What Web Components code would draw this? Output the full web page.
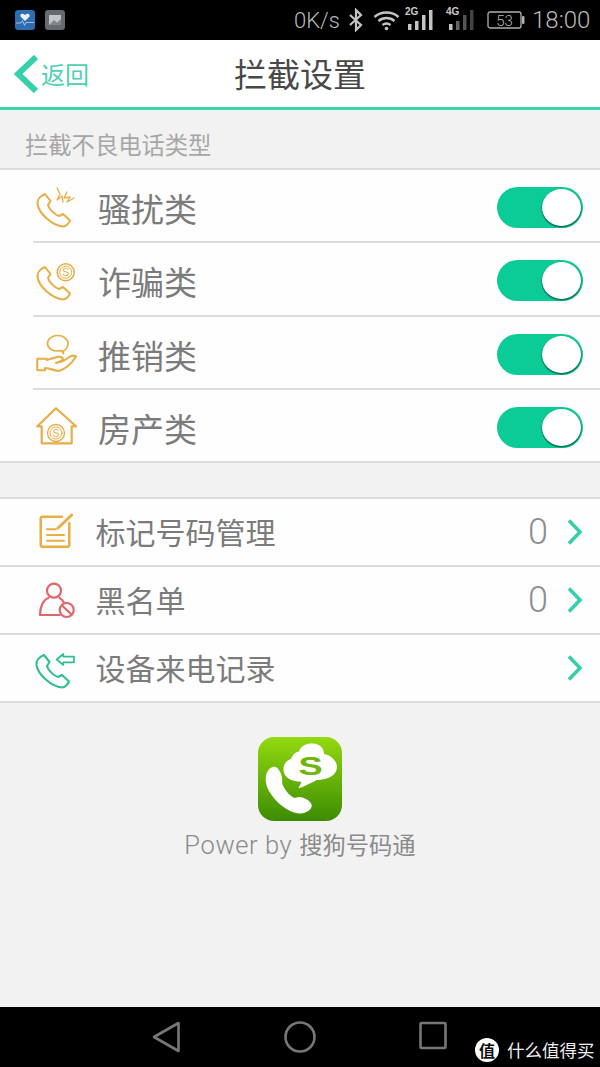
<!DOCTYPE html>
<html lang="zh">
<head>
<meta charset="utf-8">
<title>拦截设置</title>
<style>
    html, body { margin: 0; padding: 0; background: #f2f2f2; }
    body { font-family: 'Noto Sans CJK SC', 'Noto Sans', sans-serif; }
    .app { display: flex; flex-direction: column; width: 600px; height: 1067px; overflow: hidden; }
    .spacer { flex: 1; }
    svg { display: block; }
</style>
</head>
<body>
<div class="app">
    <status-bar></status-bar>
    <nav-header title="拦截设置" back="返回"></nav-header>
    <section-title>拦截不良电话类型</section-title>

    <block-list>
        <block-row>
            <svg slot="icon" width="44" height="44" viewBox="0 0 44 44" fill="none" stroke="#e8ad45" stroke-width="2" stroke-linejoin="round" stroke-linecap="round">
                <path d="M12 10C7 12 4 16 4.500 20C6 30 20 42 30 42.500C33 42.500 36 39 37 36.500L30 30L26 32C22 31 16 25 15 21L17.500 17Z"/>
                <path d="M24 4L27 10L24 16L29 12L30 18M34 8L31 14L37 13L34 18L41 14" stroke-width="1.300"/>
            </svg>
            骚扰类
        </block-row>
        <block-row>
            <svg slot="icon" width="44" height="44" viewBox="0 0 44 44" fill="none" stroke="#e8ad45" stroke-width="2" stroke-linejoin="round">
                <path d="M12 10C7 12 4 16 4.500 20C6 30 20 42 30 42.500C33 42.500 36 39 37 36.500L30 30L26 32C22 31 16 25 15 21L17.500 17Z"/>
                <circle cx="32.700" cy="15.300" r="8.500" stroke-width="1.500"/>
                <circle cx="32.700" cy="15.300" r="6" stroke-width="1"/>
                <text x="32.700" y="19" font-family="Liberation Sans" font-size="10.500" text-anchor="middle" fill="#e8ad45" stroke="none">S</text>
            </svg>
            诈骗类
        </block-row>
        <block-row>
            <svg slot="icon" width="44" height="44" viewBox="0 0 44 44" fill="none" stroke="#e8ad45" stroke-width="2.100" stroke-linejoin="round" stroke-linecap="round">
                <path d="M30 21.500C33 19.500 35 17 35 13.500C35 9 30.500 5.500 24.700 5.500C19 5.500 14.500 9 14.500 13.500C14.500 18 19 21 24.700 21C26 21 27 20.800 28 20.500L30.500 23.500Z" stroke-width="1.700"/>
                <path d="M4.300 28.800L13.700 28.800L13.700 30L25 26.800C28 26.500 30 28 30 29.500C28 31.500 26 32 23 33L30.300 31L37 26.500C40 25.300 43 25.500 43 26.500C39 33 32 39 26 41C22 41 17 38 12 38L12 40.200L4.300 40.200Z"/>
            </svg>
            推销类
        </block-row>
        <block-row last>
            <svg slot="icon" width="44" height="44" viewBox="0 0 44 44" fill="none" stroke="#e8ad45" stroke-width="2.200" stroke-linejoin="round" stroke-linecap="round">
                <path d="M23 5.300L4.300 23.300L8.700 23.300L8.700 40.300L38.700 40.300L38.700 23.300L43 23.300Z"/>
                <circle cx="23" cy="30" r="8.500" stroke-width="1.400"/>
                <circle cx="23" cy="30" r="6" stroke-width="1"/>
                <text x="23" y="33.800" font-family="Liberation Sans" font-size="10.500" text-anchor="middle" fill="#e8ad45" stroke="none">S</text>
            </svg>
            房产类
        </block-row>
    </block-list>

    <div style="height:34px;flex:none"></div>

    <block-list>
        <menu-row count="0">
            <svg slot="icon" width="44" height="44" viewBox="0 0 44 44" fill="none" stroke="#e8ad45" stroke-width="2.500" stroke-linecap="round" stroke-linejoin="round">
                <path d="M29 6.700L9.700 6.700Q7.700 6.700 7.700 8.700L7.700 34.700Q7.700 36.700 9.700 36.700L34.300 36.700Q36.300 36.700 36.300 34.700L36.300 13"/>
                <path d="M25 18L38.700 5" stroke-width="3"/>
                <path d="M14 19.300L23 19.300M14 25L31 25M14 30.700L31 30.700" stroke-width="2"/>
            </svg>
            标记号码管理
        </menu-row>
        <menu-row count="0">
            <svg slot="icon" width="44" height="44" viewBox="0 0 44 44" fill="none" stroke="#e0666b" stroke-width="2.200" stroke-linecap="round" stroke-linejoin="round">
                <circle cx="21" cy="12.700" r="7"/>
                <path d="M15.500 20C10 22 7 29 7 37L26.500 37M26.500 20C28.500 21 30 22.800 31 24.500"/>
                <circle cx="33.700" cy="32" r="7"/>
                <path d="M29 27.500L38.500 36.500"/>
            </svg>
            黑名单
        </menu-row>
        <menu-row>
            <svg slot="icon" width="44" height="44" viewBox="0 0 44 44" fill="none" stroke="#2fc08c" stroke-width="2.100" stroke-linejoin="round">
                <path d="M11 9C6 11 3 15 3.500 19C5 29 19 41 29 41.500C32 41.500 35 38 36 35.500L29 29L25 31C21 30 15 24 14 20L16.500 16Z"/>
                <path d="M23.700 13.500L30.300 8L30.300 10.700L41 10.700L41 16.300L30.300 16.300L30.300 19Z" stroke-width="1.700"/>
            </svg>
            设备来电记录
        </menu-row>
    </block-list>

    <power-by></power-by>
    <div class="spacer"></div>
    <android-nav></android-nav>
</div>

<script>
class StatusBar extends HTMLElement {
    constructor() {
        super();
        this.attachShadow({ mode: 'open' });
    }

    connectedCallback() {
        this.shadowRoot.innerHTML = `
            <style>
                :host { display: flex; align-items: center; height: 40px; background: #000; color: #b9b9b9; font-family: 'Roboto', sans-serif; font-weight: 300; flex: none; }
                svg { display: block; flex: none; }
                .speed { font-size: 22px; margin-left: 229px; width: 50px; white-space: nowrap; }
                .time { font-size: 24px; margin-left: 7px; white-space: nowrap; }
                .left { margin-left: 15px; }
                .next { margin-left: 10px; }
                .gen { position: relative; width: 30px; height: 30px; flex: none; }
                .gen span { position: absolute; left: 0; top: 1px; font: bold 10px 'Liberation Sans', sans-serif; color: #ccc; }
            </style>
            <svg class="left" width="20" height="20" viewBox="0 0 20 20">
                <rect width="20" height="20" rx="3" fill="#2f6db3"/>
                <path d="M10 11L5.500 6.500C4.500 4 7.500 2.500 10 5C12.500 2.500 15.500 4 14.500 6.500Z" fill="#e6eef7"/>
                <path d="M1 13H6L7.500 10.500L9.500 15.500L11 12.500H19" fill="none" stroke="#bcd4ee" stroke-width="0.800"/>
            </svg>
            <svg class="next" width="20" height="20" viewBox="0 0 20 20">
                <rect width="20" height="20" rx="3" fill="#666b70"/>
                <rect x="4" y="5" width="12" height="10" fill="#c4c6c8"/>
                <path d="M4 15L9 10L12 12.500L16 9V15Z" fill="#83878b"/>
            </svg>
            <span class="speed">0K/s</span>
            <svg style="margin-left:4px" width="16" height="24" viewBox="0 0 16 24" fill="none" stroke="#c4c4c4" stroke-width="2.200">
                <path d="M2 7L13 17L8 22V2L13 7L2 17"/>
            </svg>
            <svg style="margin-left:9px" width="27" height="22" viewBox="0 0 27 22" fill="none" stroke="#c4c4c4" stroke-width="2.400">
                <path d="M1.500 8C8 2 19 2 25.500 8M5.500 12C10 8 17 8 21.500 12M9.500 16C12 14 15 14 17.500 16"/>
                <circle cx="13.500" cy="19.500" r="1.800" fill="#c4c4c4" stroke="none"/>
            </svg>
            <div class="gen" style="margin-left:5px"><span>2G</span>
                <svg width="30" height="30" viewBox="0 0 30 30" fill="#c4c4c4">
                    <rect x="3" y="19" width="3.500" height="6"/><rect x="10" y="16" width="3.500" height="9"/><rect x="17" y="10" width="3.500" height="15"/><rect x="24" y="5" width="3.500" height="20"/>
                </svg>
            </div>
            <div class="gen" style="margin-left:11px"><span>4G</span>
                <svg width="30" height="30" viewBox="0 0 30 30">
                    <rect x="3" y="19" width="3.500" height="6" fill="#c4c4c4"/><rect x="10" y="16" width="3.500" height="9" fill="#666"/><rect x="17" y="10" width="3.500" height="15" fill="#555"/><rect x="24" y="5" width="3.500" height="20" fill="#444"/>
                </svg>
            </div>
            <svg style="margin-left:11px" width="38" height="20" viewBox="0 0 38 20">
                <rect x="1" y="2" width="33" height="16" rx="2" fill="none" stroke="#b0b0b0" stroke-width="1.300"/>
                <rect x="35" y="6" width="2.500" height="8" rx="1" fill="#b0b0b0"/>
                <text x="17.500" y="15.500" font-family="Roboto" font-weight="300" font-size="15" text-anchor="middle" fill="#b9b9b9">53</text>
            </svg>
            <span class="time">18:00</span>
        `;
    }
}

class NavHeader extends HTMLElement {
    constructor() {
        super();
        this.attachShadow({ mode: 'open' });
    }

    connectedCallback() {
        this.shadowRoot.innerHTML = `
            <style>
                :host { display: grid; grid-template-columns: 1fr auto 1fr; align-items: center; height: 67px; background: #fff; border-bottom: 3px solid #3bd2ae; flex: none; }
                .back { display: flex; align-items: center; color: #4fd0b0; font-size: 24px; padding-left: 14px; }
                .back svg { display: block; margin-right: 3px; }
                .title { font-size: 33px; color: #484848; line-height: 1; }
            </style>
            <div class="back">
                <svg width="24" height="38" viewBox="0 0 24 38" fill="none" stroke="#35cfa9" stroke-width="6">
                    <path d="M22 2L4 19L22 36"/>
                </svg>
                <span>${this.getAttribute('back')}</span>
            </div>
            <div class="title">${this.getAttribute('title')}</div>
            <div></div>
        `;
    }
}

class SectionTitle extends HTMLElement {
    constructor() {
        super();
        this.attachShadow({ mode: 'open' });
    }

    connectedCallback() {
        this.shadowRoot.innerHTML = `
            <style>
                :host { display: flex; align-items: center; box-sizing: border-box; height: 58px; padding: 10px 0 0 25px; font-size: 23.300px; color: #a6a6a6; flex: none; }
            </style>
            <slot></slot>
        `;
    }
}

class BlockList extends HTMLElement {
    constructor() {
        super();
        this.attachShadow({ mode: 'open' });
    }

    connectedCallback() {
        this.shadowRoot.innerHTML = `
            <style>
                :host { display: block; background: #fefefe; border-top: 2px solid #dcdcdc; border-bottom: 2px solid #dcdcdc; flex: none; }
            </style>
            <slot></slot>
        `;
    }
}

class ToggleSwitch extends HTMLElement {
    constructor() {
        super();
        this.attachShadow({ mode: 'open' });
    }

    connectedCallback() {
        this.shadowRoot.innerHTML = `
            <style>
                :host { display: flex; align-items: center; justify-content: flex-end; box-sizing: border-box; width: 86px; height: 41px; padding-right: 2px; background: #0bcb97; border-radius: 21px; flex: none; }
                .knob { width: 39px; height: 37px; border-radius: 50%; background: #fff; box-shadow: 0 1px 1px 0.500px #0a6b55; }
            </style>
            <div class="knob"></div>
        `;
    }
}

class BlockRow extends HTMLElement {
    constructor() {
        super();
        this.attachShadow({ mode: 'open' });
    }

    connectedCallback() {
        const last = this.hasAttribute('last');
        this.shadowRoot.innerHTML = `
            <style>
                :host { display: block; padding-left: 33px; }
                .row { display: flex; align-items: center; box-sizing: border-box; height: ${last ? '71.250px' : '73.250px'}; padding: 4px 17px 0 0; border-bottom: ${last ? 'none' : '2px solid #dcdcdc'}; font-size: 33px; color: #7b7b7b; }
                .icon { width: 44px; height: 44px; margin: -4px 21px 0 0; flex: none; }
                .label { flex: 1; line-height: 1; padding-top: 2px; }
            </style>
            <div class="row">
                <div class="icon"><slot name="icon"></slot></div>
                <div class="label"><slot></slot></div>
                <toggle-switch></toggle-switch>
            </div>
        `;
    }
}

class MenuRow extends HTMLElement {
    constructor() {
        super();
        this.attachShadow({ mode: 'open' });
    }

    connectedCallback() {
        const count = this.getAttribute('count');
        this.shadowRoot.innerHTML = `
            <style>
                :host { display: flex; align-items: center; box-sizing: border-box; height: 68px; padding: 0 17px 0 33px; font-size: 30px; color: #7b7b7b; border-bottom: 2px solid #dcdcdc; }
                :host(:last-child) { height: 66px; border-bottom: none; }
                .icon { width: 44px; height: 44px; margin-right: 18.500px; flex: none; }
                .label { flex: 1; line-height: 1; padding-bottom: 3px; }
                .count { font-family: 'Roboto', sans-serif; font-weight: 300; font-size: 36px; color: #8e8e8e; margin-right: 19px; line-height: 1; }
                svg { display: block; flex: none; }
            </style>
            <div class="icon"><slot name="icon"></slot></div>
            <div class="label"><slot></slot></div>
            ${count === null ? '' : `<span class="count">${count}</span>`}
            <svg width="16" height="26" viewBox="0 0 16 26" fill="none" stroke="#35cfa9" stroke-width="3.600">
                <path d="M2 1.500L13 13L2 24.500"/>
            </svg>
        `;
    }
}

class PowerBy extends HTMLElement {
    constructor() {
        super();
        this.attachShadow({ mode: 'open' });
    }

    connectedCallback() {
        this.shadowRoot.innerHTML = `
            <style>
                :host { display: flex; flex-direction: column; align-items: center; padding-top: 34px; color: #8a8a8a; flex: none; }
                svg { display: block; }
                .text { margin-top: 6px; font-size: 23.300px; line-height: 34px; white-space: nowrap; }
                .latin { font-family: 'Roboto', sans-serif; font-weight: 300; font-size: 25.500px; letter-spacing: 0.6px; }
            </style>
            <svg width="84" height="84" viewBox="0 0 84 84">
                <defs>
                    <linearGradient id="logo" x1="0" y1="0" x2="0" y2="1">
                        <stop offset="0" stop-color="#93da10"/>
                        <stop offset="1" stop-color="#3c8c02"/>
                    </linearGradient>
                </defs>
                <rect width="84" height="84" rx="16" fill="url(#logo)"/>
                <path d="M40.300 51.300L43.700 44.700C36 45 26 42 25.500 33C25 27 29 23 33 22C35 17 38 15 41 14.500C43 8 50 6 55 6.500C62 7 66 11 66 17C73 18 79 24 79 30C79 38 70 43 59 43C52 46 46 50 40.300 51.300Z" fill="#fff"/>
                <text transform="translate(52.700 37.500) scale(1.250 0.900)" font-family="Liberation Sans" font-weight="bold" font-size="29" text-anchor="middle" fill="#6fb60a">S</text>
                <path d="M15.300 29.700C10 31 7.500 37 7.700 43C8 57 27 76 42 76.500C48 76.800 54.500 72 53.700 68C52.500 63 45 60 41 60C38.500 60 37.500 61.500 35.500 60.500C30 57.500 26.500 52 24.500 47.500C23.700 45 24.500 44 24 41C23.500 36 20 29 15.300 29.700Z" fill="#fff"/>
            </svg>
            <div class="text"><span class="latin">Power by </span>搜狗号码通</div>
        `;
    }
}

class AndroidNav extends HTMLElement {
    constructor() {
        super();
        this.attachShadow({ mode: 'open' });
    }

    connectedCallback() {
        this.shadowRoot.innerHTML = `
            <style>
                :host { display: block; position: relative; height: 60px; background: #000; flex: none; }
                .keys { display: grid; grid-template-columns: 167px 133px 133px; padding-top: 14px; }
                .keys svg { display: block; justify-self: center; overflow: visible; }
                .mark { position: absolute; left: 475px; top: 30px; display: flex; align-items: center; color: #eee; font-size: 17.500px; white-space: nowrap; }
                .badge { width: 24px; height: 24px; margin-right: 8px; border-radius: 50%; background: #fff; color: #111; font-size: 16px; font-weight: bold; line-height: 24px; text-align: center; }
            </style>
            <div class="keys">
                <svg style="transform:translateX(83px)" width="30" height="32" viewBox="0 0 30 32" fill="none" stroke="#777" stroke-width="2.600" stroke-linejoin="round">
                    <path d="M2 16L26.500 2V30Z"/>
                </svg>
                <svg style="transform:translateX(66px)" width="32" height="32" viewBox="0 0 32 32" fill="none" stroke="#777" stroke-width="2.600">
                    <circle cx="16" cy="16" r="14.500"/>
                </svg>
                <svg style="transform:translateX(66px)" width="28" height="28" viewBox="0 0 28 28" fill="none" stroke="#777" stroke-width="2.600" stroke-linejoin="round">
                    <rect x="1.500" y="2" width="25" height="25" rx="1"/>
                </svg>
            </div>
            <div class="mark"><span class="badge">值</span>什么值得买</div>
        `;
    }
}

customElements.define('status-bar', StatusBar);
customElements.define('nav-header', NavHeader);
customElements.define('section-title', SectionTitle);
customElements.define('block-list', BlockList);
customElements.define('toggle-switch', ToggleSwitch);
customElements.define('block-row', BlockRow);
customElements.define('menu-row', MenuRow);
customElements.define('power-by', PowerBy);
customElements.define('android-nav', AndroidNav);
</script>
</body>
</html>
